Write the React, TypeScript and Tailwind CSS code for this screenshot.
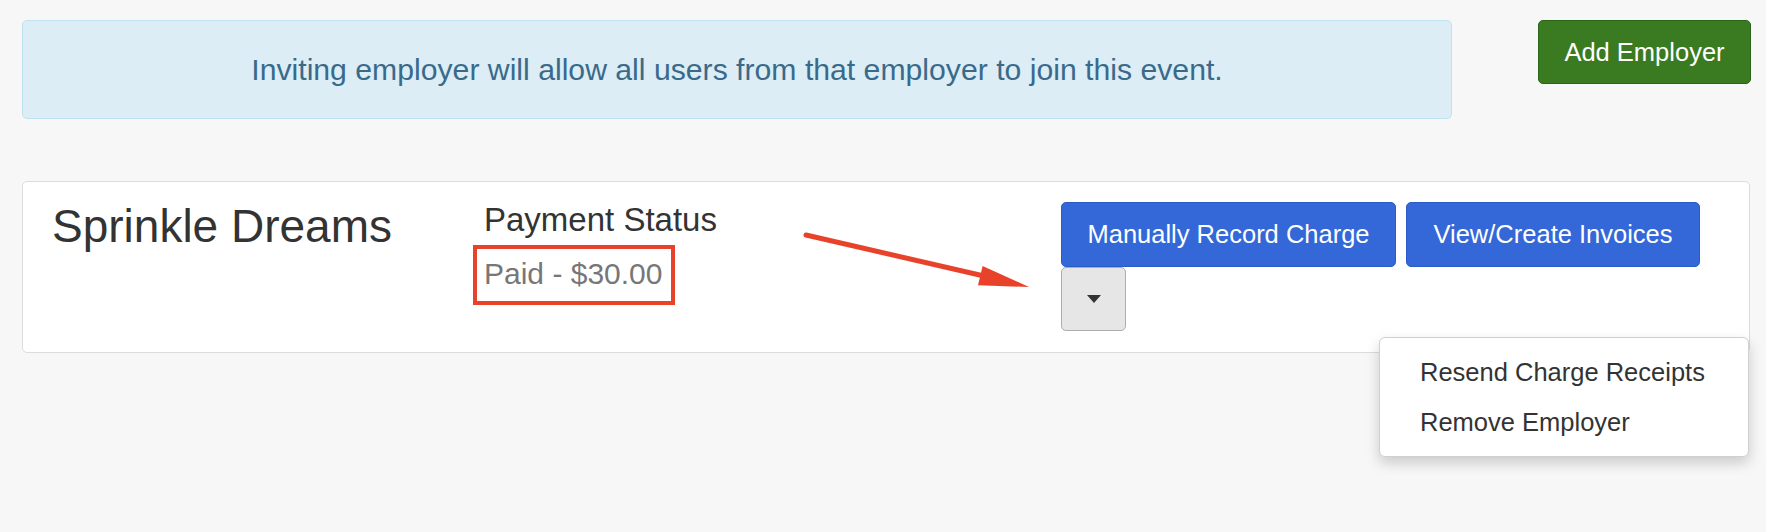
import React from 'react';

const font = "font-['Liberation_Sans',Arial,sans-serif]";

function EmployerCard() {
  return (
    <div className="relative mt-[62px] flex h-[172px] w-[1728px] rounded-[5px] border border-[#dcdcdc] bg-white pl-[29px] pt-[21px]">
      <div className="w-[432px] text-[46px] leading-none text-[#333]">Sprinkle Dreams</div>

      <div className="relative w-[577px]">
        <div className="text-[33px] leading-none text-[#333]">Payment Status</div>
        <div className="mt-[23px] text-[30px] leading-none text-[#777]">Paid - $30.00</div>
        {/* highlight box around the paid amount */}
        <div className="absolute left-[-11px] top-[42px] h-[60px] w-[202px] border-4 border-[#e8432a]" />
      </div>

      <div className="-mt-[1px] flex flex-col">
        <div className="flex gap-[10px]">
          <button className="h-[65px] w-[335px] rounded-[5px] border border-[#2b5cc6] bg-[#3468d8] text-[25.5px] text-white">
            Manually Record Charge
          </button>
          <button className="h-[65px] w-[294px] rounded-[5px] border border-[#2b5cc6] bg-[#3468d8] text-[25.5px] text-white">
            View/Create Invoices
          </button>
        </div>
        <button className="flex h-[64px] w-[65px] items-center justify-center rounded-[5px] border border-[#adadad] bg-[#e6e6e6]">
          <span className="h-0 w-0 border-x-[7px] border-t-[8px] border-x-transparent border-t-[#333]" />
        </button>
      </div>

      {/* arrow pointing at the dropdown toggle */}
      <svg className="absolute left-[777px] top-[43px]" width="240" height="70" viewBox="0 0 240 70">
        <line x1="6" y1="10" x2="184" y2="51" stroke="#e8432a" strokeWidth="5" strokeLinecap="round" />
        <polygon points="229,62 182.6,40.9 178,60.3" fill="#e8432a" />
      </svg>

      <div className="absolute left-[1356px] top-[155px] w-[370px] rounded-[6px] border border-[#d0d0d0] bg-white py-[9px] shadow-[0_6px_14px_rgba(0,0,0,0.18)]">
        <div className="flex h-[50px] items-center pl-[40px] text-[25.5px] text-[#333]">Resend Charge Receipts</div>
        <div className="flex h-[50px] items-center pl-[40px] text-[25.5px] text-[#333]">Remove Employer</div>
      </div>
    </div>
  );
}

export default function App() {
  return (
    <div className={`min-h-[532px] bg-[#f7f7f7] pl-[22px] pt-[20px] ${font}`}>
      <div className="flex w-[1729px] items-start">
        <div className="flex h-[99px] w-[1430px] items-center justify-center rounded-[5px] border border-[#bfe3ee] bg-[#dcedf6] text-[30.2px] text-[#3a6a8a]">
          Inviting employer will allow all users from that employer to join this event.
        </div>
        <button className="ml-auto h-[64px] w-[213px] rounded-[5px] border border-[#2c6418] bg-[#3a7b22] text-[25.5px] text-white">
          Add Employer
        </button>
      </div>

      <EmployerCard />
    </div>
  );
}
